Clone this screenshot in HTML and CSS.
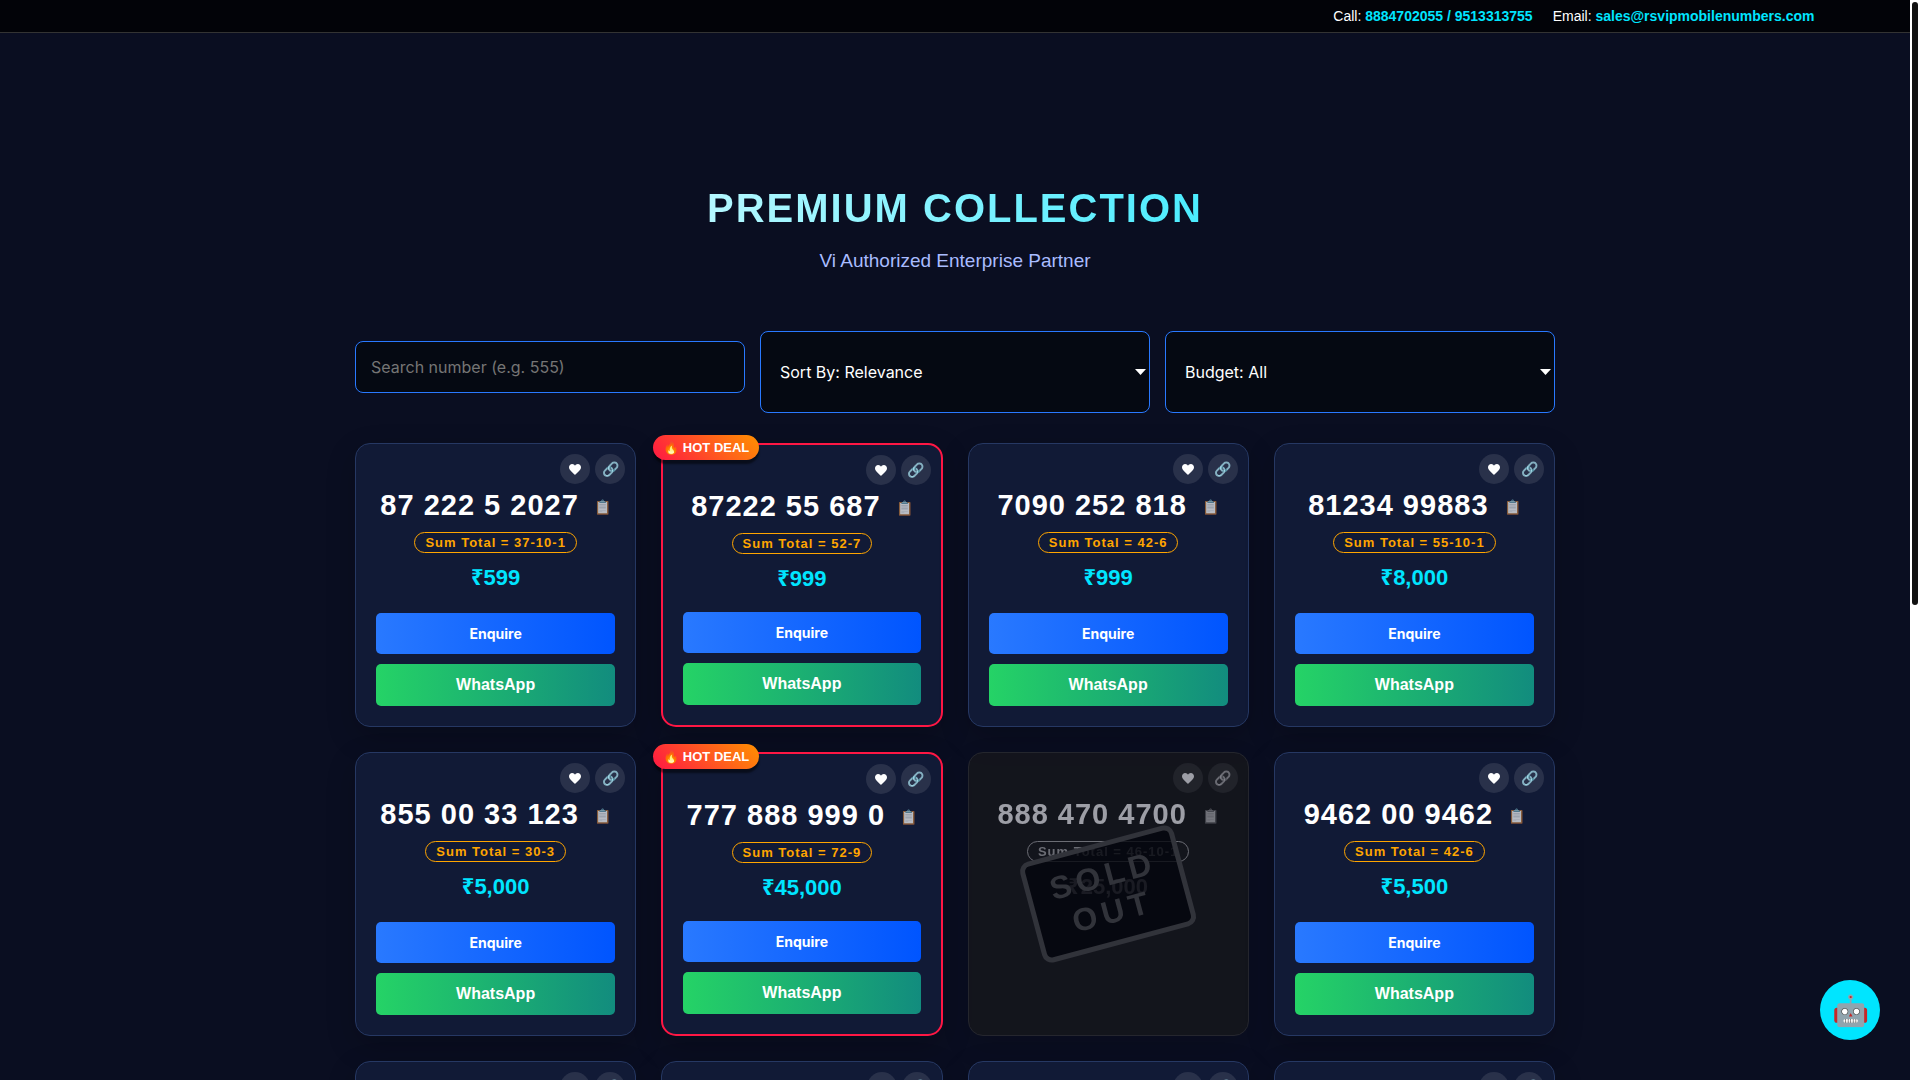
FILE: index.html
```html
<!DOCTYPE html>
<html lang="en">
<head>
  <meta charset="UTF-8" />
  <meta name="viewport" content="width=device-width, initial-scale=1.0"/>
  <title>Premium Collection</title>
  <link rel="stylesheet" href="styles.css">
</head>
<body>
  <header class="top-bar">
    <span>Call: <a href="tel:8884702055">8884702055 / 9513313755</a></span>
    <span>Email: <a href="mailto:sales@rsvipmobilenumbers.com">sales@rsvipmobilenumbers.com</a></span>
  </header>

  <main class="container">
    <section class="hero">
      <h1>PREMIUM COLLECTION</h1>
      <p>Vi Authorized Enterprise Partner</p>
    </section>

    <form class="filters">
      <input type="text" id="search" class="field" placeholder="Search number (e.g. 555)" aria-label="Search number">
      <select id="sort" class="field" aria-label="Sort by">
        <option>Sort By: Relevance</option>
      </select>
      <select id="budget" class="field" aria-label="Budget">
        <option>Budget: All</option>
      </select>
    </form>

    <div class="grid" id="grid"></div>
  </main>

  <button class="chat-btn" aria-label="Chat">🤖</button>
  <div class="scroll-track"><div class="scroll-thumb" id="thumb"></div></div>

  <script>
    const numbers = [
      { num: '87 222 5 2027', sum: '37-10-1', price: '599' },
      { num: '87222 55 687', sum: '52-7', price: '999', hot: true },
      { num: '7090 252 818', sum: '42-6', price: '999' },
      { num: '81234 99883', sum: '55-10-1', price: '8,000' },
      { num: '855 00 33 123', sum: '30-3', price: '5,000' },
      { num: '777 888 999 0', sum: '72-9', price: '45,000', hot: true },
      { num: '888 470 4700', sum: '46-10-1', price: '25,000', sold: true },
      { num: '9462 00 9462', sum: '42-6', price: '5,500' },
      {}, {}, {}, {}
    ];

    const heart = '<svg class="heart" viewBox="0 0 24 22"><path d="M12 22C9 18 0 13 0 6.5C0 2.5 3 0 6.3 0C9 0 11 1.4 12 3.6C13 1.4 15 0 17.7 0C21 0 24 2.5 24 6.5C24 13 15 18 12 22Z"/></svg>';

    function cardHtml(n) {
      let html = '';
      if (n.hot) html += '<span class="badge">🔥 HOT DEAL</span>';
      html += `
        <div class="card-icons">
          <button class="icon-btn" aria-label="Save">${heart}</button>
          <button class="icon-btn" aria-label="Share">🔗</button>
        </div>`;
      if (!n.num) return html;

      html += `
        <div class="number">${n.num} <button class="copy-btn" aria-label="Copy">📋</button></div>
        <div class="sum">Sum Total = ${n.sum}</div>
        <div class="price">₹${n.price}</div>`;
      if (n.sold) {
        html += '<div class="stamp">SOLD<br>OUT</div>';
      } else {
        html += `
        <div class="actions">
          <button class="btn enquire">Enquire</button>
          <a class="btn whatsapp" href="#">WhatsApp</a>
        </div>`;
      }
      return html;
    }

    const grid = document.getElementById('grid');
    numbers.forEach(n => {
      const card = document.createElement('div');
      card.className = 'card' + (n.hot ? ' hot' : '') + (n.sold ? ' sold' : '');
      card.innerHTML = cardHtml(n);
      grid.appendChild(card);
    });

    // custom scrollbar
    const thumb = document.getElementById('thumb');
    function moveThumb() {
      const total = document.documentElement.scrollHeight;
      thumb.style.height = (window.innerHeight / total * 100) + '%';
      thumb.style.top = (window.scrollY / total * 100) + '%';
    }
    window.addEventListener('scroll', moveThumb);
    window.addEventListener('resize', moveThumb);
    moveThumb();
  </script>
</body>
</html>
```
FILE: styles.css
```css
* {
  box-sizing: border-box;
}

html {
  scrollbar-width: none;
}

body {
  margin: 0;
  padding-right: 10px;
  background: #0a0e21;
  color: #ffffff;
  font-family: "Liberation Sans", Arial, "Noto Sans", sans-serif;
}

.top-bar {
  display: flex;
  justify-content: flex-end;
  gap: 20px;
  padding: 8px 5%;
  background: #020308;
  border-bottom: 1px solid #333333;
  font-size: 14px;
  line-height: 16px;
}
.top-bar a {
  color: #00e5ff;
  font-weight: bold;
  text-decoration: none;
}

.container {
  max-width: 1200px;
  margin: 0 auto;
  padding-bottom: 578px;
}

.hero {
  padding: 152px 0 58px;
  text-align: center;
}
.hero h1 {
  margin: 0 0 18px;
  font-size: 40px;
  line-height: 46px;
  letter-spacing: 2px;
  background: linear-gradient(90deg, #ffffff, #00e5ff);
  -webkit-background-clip: text;
  background-clip: text;
  color: transparent;
}
.hero p {
  margin: 0;
  color: #a9bcff;
  font-size: 19px;
  line-height: 24px;
}

.filters {
  display: grid;
  grid-template-columns: repeat(3, 1fr);
  gap: 15px;
  align-items: center;
  margin-bottom: 30px;
}
.field {
  width: 100%;
  padding: 15px;
  background: #050912;
  border: 1px solid #2979ff;
  border-radius: 8px;
  color: #ffffff;
  font-family: Inter, sans-serif;
  font-size: 16px;
}
input.field {
  height: 52px;
  margin-bottom: 10px;
}
select.field {
  appearance: none;
  height: 82px;
  padding: 15px 19px;
  background: #050912 url("data:image/svg+xml,%3Csvg xmlns='http://www.w3.org/2000/svg' width='11' height='6'%3E%3Cpath d='M0 0h11L5.5 6z' fill='white'/%3E%3C/svg%3E") no-repeat right 3px center;
}
.field::placeholder {
  color: #757575;
}

.grid {
  display: grid;
  grid-template-columns: repeat(4, 1fr);
  gap: 25px;
}

.card {
  position: relative;
  display: flex;
  flex-direction: column;
  align-items: center;
  min-height: 284px;
  padding: 20px;
  background: #111a36;
  border: 1px solid #263863;
  border-radius: 15px;
  box-shadow: 0 10px 30px rgba(0, 0, 0, 0.2);
}
.card.hot {
  border: 2px solid #ff1744;
}
.card.sold {
  filter: grayscale(1);
  opacity: 0.6;
}

.badge {
  position: absolute;
  top: -10px;
  left: -10px;
  padding: 5px 10px;
  background: linear-gradient(45deg, #ff1744, #ff9100);
  border-radius: 20px;
  box-shadow: 0 4px 2px rgba(0, 0, 0, 0.5);
  font-size: 13px;
  line-height: 15px;
  font-weight: bold;
}

.card-icons {
  position: absolute;
  top: 10px;
  right: 10px;
  display: flex;
  gap: 5px;
}
.icon-btn {
  width: 30px;
  height: 30px;
  padding: 0;
  background: rgba(255, 255, 255, 0.1);
  border: none;
  border-radius: 50%;
  color: #ffffff;
  font-size: 14px;
  cursor: pointer;
}
.heart {
  display: block;
  width: 12px;
  height: 11px;
  margin: 0 auto;
  fill: #ffffff;
}

.number {
  margin-top: 25px;
  font-size: 29px;
  line-height: 33px;
  font-weight: bold;
  letter-spacing: 1px;
  white-space: nowrap;
}
.copy-btn {
  margin-left: 6px;
  padding: 0;
  background: none;
  border: none;
  font-size: 14px;
  vertical-align: middle;
  opacity: 0.7;
  cursor: pointer;
}

.sum {
  margin-top: 10px;
  padding: 2px 10px;
  border: 1px solid #ffa500;
  border-radius: 12px;
  color: #ffa500;
  font-size: 13px;
  line-height: 15px;
  font-weight: bold;
  letter-spacing: 1px;
}

.price {
  margin: 12px 0;
  color: #00e5ff;
  font-size: 22px;
  line-height: 25px;
  font-weight: bold;
}

.actions {
  display: flex;
  flex-direction: column;
  gap: 10px;
  width: 100%;
  margin-top: auto;
}
.btn {
  display: block;
  width: 100%;
  padding: 12px;
  border: none;
  border-radius: 5px;
  color: #ffffff;
  font-weight: bold;
  text-align: center;
  text-decoration: none;
  cursor: pointer;
}
.enquire {
  background: linear-gradient(90deg, #2979ff, #0055ff);
  font-family: Inter, sans-serif;
  font-size: 14px;
  line-height: 17px;
}
.whatsapp {
  background: linear-gradient(90deg, #25d366, #128c7e);
  font-size: 16px;
  line-height: 18px;
}

.stamp {
  position: absolute;
  top: 50%;
  left: 50%;
  transform: translate(-50%, -50%) rotate(-15deg);
  padding: 10px 20px;
  background: rgba(0, 0, 0, 0.8);
  border: 5px solid #ff1744;
  border-radius: 10px;
  color: #ff1744;
  font-size: 32px;
  line-height: 37px;
  font-weight: bold;
  letter-spacing: 5px;
  text-align: center;
}

.chat-btn {
  position: fixed;
  right: 40px;
  bottom: 40px;
  width: 60px;
  height: 60px;
  padding: 0;
  background: #00e5ff;
  border: none;
  border-radius: 50%;
  font-size: 30px;
  cursor: pointer;
}

.scroll-track {
  position: fixed;
  top: 0;
  right: 0;
  bottom: 0;
  width: 10px;
  padding: 2px 0;
  background: #ffffff;
}
.scroll-thumb {
  position: absolute;
  left: 0;
  width: 10px;
  background: #111111;
  border: 2px solid #ffffff;
  border-radius: 5px;
}
```
